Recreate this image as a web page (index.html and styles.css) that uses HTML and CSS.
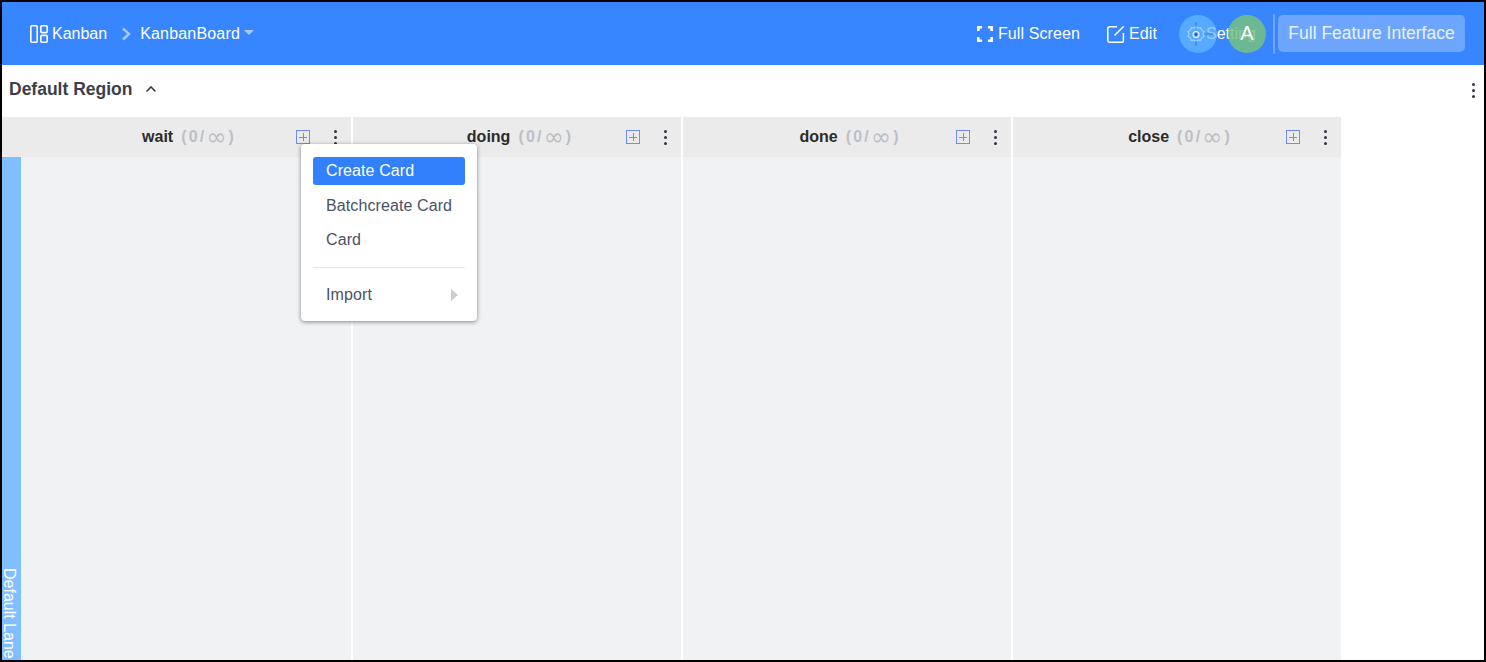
FILE: index.html
```html
<!DOCTYPE html>
<html lang="en">
<head>
<meta charset="utf-8">
<title>KanbanBoard</title>
<link rel="stylesheet" href="styles.css">
</head>
<body>
<div class="frame">
  <header class="topbar">
    <nav class="crumbs">
      <svg class="icon-board" width="18" height="18" viewBox="0 0 18 18" fill="none" stroke="#fff" stroke-width="1.6"><rect x="0.8" y="0.8" width="6.4" height="16.4" rx="1.2"/><rect x="10.8" y="0.8" width="6.4" height="6.8" rx="1.2"/><rect x="10.8" y="10.4" width="6.4" height="6.8" rx="1.2"/></svg>
      <span class="crumb-first">Kanban</span>
      <svg class="crumb-sep" width="10" height="14" viewBox="0 0 10 14" fill="none" stroke="#a9c9ff" stroke-width="2.4"><path d="M2 1.5 8 7l-6 5.5"/></svg>
      <span class="crumb-last">KanbanBoard</span>
      <span class="caret"></span>
    </nav>
    <div class="actions">
      <a class="action action-full">
        <svg width="16" height="16" viewBox="0 0 16 16" fill="none" stroke="#fff" stroke-width="2.6"><path d="M1.300 5V1.300H5M11 1.300h3.700V5M14.700 11v3.700H11M5 14.700H1.300V11"/></svg>
        <span>Full Screen</span>
      </a>
      <a class="action action-edit">
        <svg width="18" height="18" viewBox="0 0 18 18" fill="none" stroke="#fff" stroke-width="1.5"><path d="M10 1.800H2.600A1.800 1.800 0 0 0 .8 3.600v11.800a1.800 1.800 0 0 0 1.800 1.800h12a1.800 1.800 0 0 0 1.800-1.800V8"/><path d="M7.500 10.500 16.800 1.200"/></svg>
        <span>Edit</span>
      </a>
      <div class="setting">
        <span class="setting-label">Setting</span>
        <span class="gear-halo">
          <svg width="38" height="38" viewBox="0 0 38 38" fill="none"><path d="M17 11l1.900 2 2.800-.3.900 2.500 2.400 1.500-1.200 2.300 1.200 2.300-2.400 1.500-.9 2.500-2.800-.3-1.900 2-1.900-2-2.800.3-.9-2.500-2.400-1.500 1.200-2.300-1.200-2.300 2.400-1.500.9-2.500 2.800.3z" stroke="#a8d0ff" stroke-width="1.200"/><path d="M17 7v5M17 26v5M26 19h8" stroke="#3785ff" stroke-width="1.500"/><circle cx="17" cy="19.500" r="3" stroke="#eef5ff" stroke-width="1.100"/><circle cx="17" cy="19.500" r="1.300" fill="#2a46c8"/></svg>
        </span>
      </div>
      <span class="avatar">A</span>
      <span class="divider"></span>
      <button class="feature">Full Feature Interface</button>
    </div>
  </header>

  <section class="region">
    <div class="region-title">
      <span>Default Region</span>
      <svg width="12" height="8" viewBox="0 0 12 8" fill="none" stroke="#3b3f4c" stroke-width="1.600"><path d="M1.500 6.500 6 2l4.500 4.500"/></svg>
    </div>
    <span class="dots dots-region"><i></i><i></i><i></i></span>
  </section>

  <main class="board">
    <div class="col col-first">
      <div class="col-head">
        <span></span>
        <div class="col-title"><b>wait</b><span class="limit"><span>(</span><span>0</span><span>/</span><u>∞</u><span>)</span></span></div>
        <div class="col-tools"><span class="plus"></span><span class="dots"><i></i><i></i><i></i></span></div>
      </div>
      <div class="col-body"><div class="lane"><span>Default Lane</span></div></div>
    </div>
    <div class="col">
      <div class="col-head">
        <span></span>
        <div class="col-title"><b>doing</b><span class="limit"><span>(</span><span>0</span><span>/</span><u>∞</u><span>)</span></span></div>
        <div class="col-tools"><span class="plus"></span><span class="dots"><i></i><i></i><i></i></span></div>
      </div>
      <div class="col-body"></div>
    </div>
    <div class="col">
      <div class="col-head">
        <span></span>
        <div class="col-title"><b>done</b><span class="limit"><span>(</span><span>0</span><span>/</span><u>∞</u><span>)</span></span></div>
        <div class="col-tools"><span class="plus"></span><span class="dots"><i></i><i></i><i></i></span></div>
      </div>
      <div class="col-body"></div>
    </div>
    <div class="col">
      <div class="col-head">
        <span></span>
        <div class="col-title"><b>close</b><span class="limit"><span>(</span><span>0</span><span>/</span><u>∞</u><span>)</span></span></div>
        <div class="col-tools"><span class="plus"></span><span class="dots"><i></i><i></i><i></i></span></div>
      </div>
      <div class="col-body"></div>
    </div>

    <ul class="menu">
      <li class="menu-item active">Create Card</li>
      <li class="menu-item">Batchcreate Card</li>
      <li class="menu-item">Card</li>
      <li class="menu-sep"></li>
      <li class="menu-item has-sub">Import<span class="sub-arrow"></span></li>
    </ul>
  </main>
</div>
</body>
</html>
```
FILE: styles.css
```css
* { box-sizing: border-box; }
html, body { margin: 0; height: 100%; overflow: hidden; }
body { font-family: "Liberation Sans", Arial, sans-serif; font-size: 16px; background: #fff; }

.frame {
  width: 1486px;
  height: 662px;
  border: 2px solid #000;
  display: flex;
  flex-direction: column;
  overflow: hidden;
  background: #fff;
}

/* top bar */
.topbar {
  height: 63px;
  flex: none;
  background: #3785ff;
  color: #fff;
  display: flex;
  align-items: center;
  justify-content: space-between;
  padding: 0 19px 0 28px;
}
.crumbs { display: flex; align-items: center; }
.crumb-first { margin-left: 4px; }
.crumb-last { letter-spacing: 0.18px; }
.crumb-sep { margin: 0 9px 0 14px; }
.caret {
  margin-left: 4px;
  margin-top: -2px;
  border-left: 5px solid transparent;
  border-right: 5px solid transparent;
  border-top: 5px solid #a9c9ff;
}
.actions { display: flex; align-items: center; }
.action { display: flex; align-items: center; gap: 4px; color: #fff; letter-spacing: 0.1px; }
.action-full { gap: 5px; }
.action-edit { margin-left: 27px; }
.setting { display: flex; align-items: center; margin-left: 22px; width: 49px; position: relative; height: 38px; }
.setting-label { position: absolute; left: 27px; top: 10px; color: #fff; white-space: nowrap; }
.gear-halo {
  position: absolute;
  left: 0;
  top: 0;
  width: 38px;
  height: 38px;
  border-radius: 50%;
  background: rgba(100, 185, 255, 0.7);
  display: flex;
  align-items: center;
  justify-content: center;
}
.avatar {
  position: relative;
  width: 38px;
  height: 38px;
  border-radius: 50%;
  background: rgba(117, 193, 129, 0.85);
  color: #fff;
  font-size: 20px;
  display: flex;
  align-items: center;
  justify-content: center;
}
.divider { width: 2px; height: 40px; margin-left: 7px; background: #6ea6ff; }
.feature {
  margin-left: 3px;
  width: 187px;
  height: 37px;
  border: 0;
  border-radius: 5px;
  padding: 0;
  background: #6ea6ff;
  color: #eaf2ff;
  font: 17.500px "Liberation Sans", Arial, sans-serif;
}

/* region row */
.region {
  height: 52px;
  flex: none;
  display: flex;
  align-items: center;
  justify-content: space-between;
  padding: 0 9px 4px 7px;
}
.region-title {
  display: flex;
  align-items: center;
  gap: 13px;
  font-size: 17.500px;
  font-weight: 700;
  color: #3b3f4c;
}
.dots { display: inline-flex; flex-direction: column; gap: 3px; width: 3px; }
.dots i { display: block; width: 3px; height: 3px; border-radius: 50%; background: #2f3442; }
.dots-region { margin-top: 2px; }

/* board */
.board { flex: 1; position: relative; display: flex; gap: 2px; min-height: 0; }
.col { width: 328px; display: flex; flex-direction: column; }
.col-first { width: 349px; }
.col-head {
  height: 40px;
  flex: none;
  background: #ebebeb;
  display: grid;
  grid-template-columns: 1fr auto 1fr;
  align-items: center;
  padding-left: 4px;
}
.col-first .col-head { padding-left: 23px; }
.col-title { display: flex; align-items: center; gap: 8px; white-space: nowrap; }
.col-title b { color: #2b2b2b; font-size: 16px; }
.limit { display: inline-flex; align-items: center; gap: 2.200px; color: #bdbfc6; font-weight: 700; font-size: 16px; }
.limit u { text-decoration: none; font-family: "DejaVu Sans", sans-serif; font-weight: 400; font-size: 24px; line-height: 18px; }
.col-tools { display: flex; align-items: center; justify-content: flex-end; gap: 24px; padding-right: 14px; }
.plus {
  width: 14px;
  height: 14px;
  border: 1px solid #6a8cff;
  position: relative;
  flex: none;
}
.plus::before, .plus::after { content: ""; position: absolute; background: #6a8cff; }
.plus::before { left: 2px; right: 2px; top: 5.500px; height: 1px; }
.plus::after { top: 2px; bottom: 2px; left: 5.500px; width: 1px; }
.col-body { flex: 1; background: #f1f2f4; min-height: 0; }
.lane {
  width: 19px;
  height: 100%;
  background: #80bfff;
  color: #fff;
  overflow: hidden;
  display: flex;
  padding-top: 411px;
}
.lane span { writing-mode: vertical-rl; white-space: nowrap; line-height: 14px; }

/* context menu */
.menu {
  position: absolute;
  left: 299px;
  top: 27px;
  width: 176px;
  height: 177px;
  margin: 0;
  padding: 13px 12px 0;
  list-style: none;
  background: #fff;
  border-radius: 4px;
  box-shadow: 0 1px 4px rgba(0, 0, 0, 0.45);
  color: #4a5266;
  letter-spacing: 0.1px;
}
.menu-item { height: 28px; line-height: 28px; padding-left: 13px; border-radius: 3px; margin-bottom: 6px; position: relative; }
.menu-item.active { background: #3280fc; color: #fff; margin-bottom: 7px; }
.menu-sep { height: 1px; background: #e6e6e6; margin: 13px 0 13px; }
.sub-arrow {
  position: absolute;
  right: 7px;
  top: 8px;
  border-top: 6px solid transparent;
  border-bottom: 6px solid transparent;
  border-left: 7px solid #c9ccd2;
}
```
